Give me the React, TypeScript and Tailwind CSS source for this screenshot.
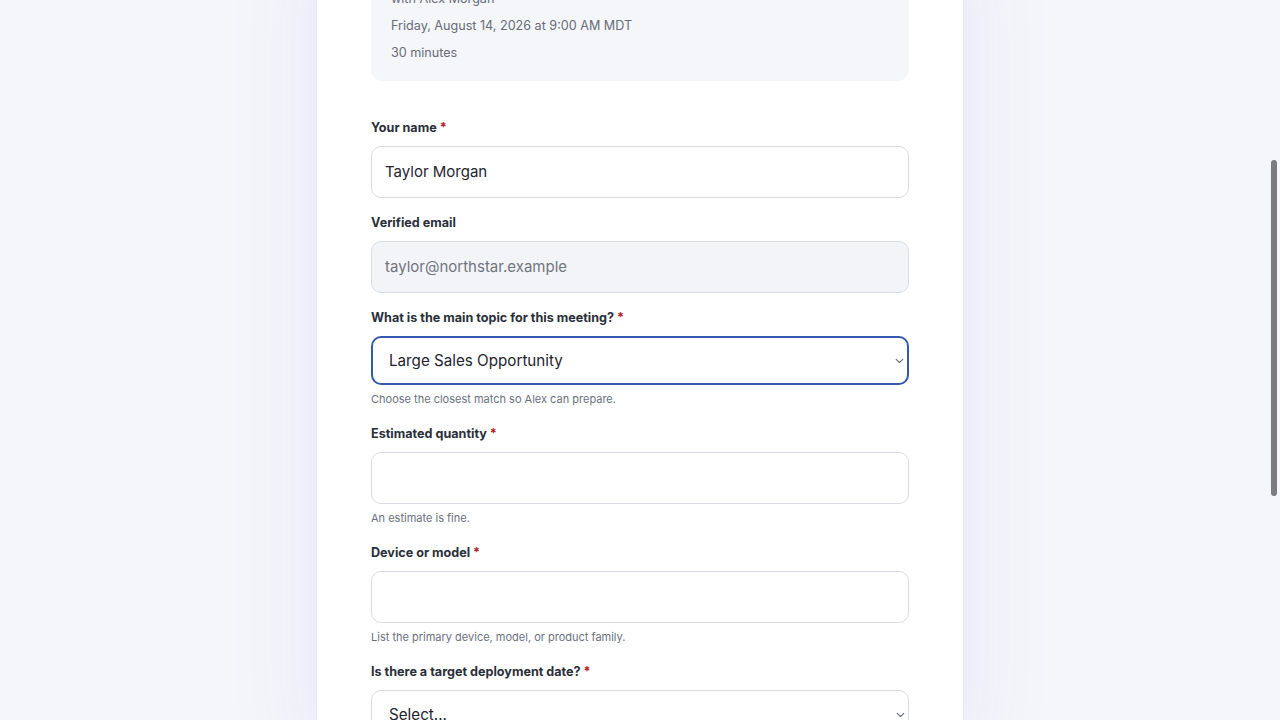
import type { ReactNode } from 'react'

function Label({ children, required }: { children: ReactNode; required?: boolean }) {
  return (
    <label className="mb-[10px] block text-[12.6px] font-bold leading-[16px] text-[#2a2f3a]">
      {children}
      {required && <span className="text-[#b4232c]"> *</span>}
    </label>
  )
}

function Hint({ children }: { children: ReactNode }) {
  return <p className="mb-[2px] mt-[6px] text-[11px] leading-[16px] text-[#6b7080]">{children}</p>
}

function TextField({ value, disabled }: { value?: string; disabled?: boolean }) {
  return (
    <div
      className={
        disabled
          ? 'flex h-[52px] items-center rounded-[10px] border border-[#d9dce3] bg-[#f3f4f7] px-[13px] text-[15px] text-[#70757f]'
          : 'flex h-[52px] items-center rounded-[10px] border border-[#d9dce3] bg-white px-[13px] text-[15px] text-[#1f2430]'
      }
    >
      {value}
    </div>
  )
}

function SelectField({ value, focused }: { value: string; focused?: boolean }) {
  return (
    <div
      className={
        focused
          ? 'relative flex h-[49px] items-center rounded-[10px] border-2 border-[#3459ad] bg-white px-[16px] pt-[2px] text-[15.2px] text-[#1f2430]'
          : 'relative flex h-[49px] items-center rounded-[10px] border border-[#d9dce3] bg-white px-[17px] pt-[2px] text-[15.2px] text-[#1f2430]'
      }
    >
      {value}
      <svg className="absolute right-[3px] top-1/2 -translate-y-1/2" width="9" height="6" viewBox="0 0 9 6" fill="none">
        <path d="M1.2 1.3L4.5 4.5l3.3-3.2" stroke="#6b7280" strokeWidth="1.1" strokeLinecap="round" strokeLinejoin="round" />
      </svg>
    </div>
  )
}

export default function App() {
  return (
    <div
      className="relative h-screen overflow-hidden bg-[#f5f6fa]"
      style={{ fontFamily: 'Inter, "Noto Sans", "Liberation Sans", sans-serif' }}
    >
      <div className="mx-auto -mt-[60px] min-h-[820px] w-[648px] border-x border-[#e6e8f2] bg-white px-[54px] shadow-[0_0_90px_rgba(79,70,229,0.09)]">
        <div className="rounded-xl bg-[#f5f6fa] px-5 pb-[18px] pt-5">
          <p className="text-[15px] font-semibold leading-[22px] text-[#1f2430]">Sales consultation</p>
          <div className="mt-[7px] flex flex-col gap-[7px] text-[12.6px] leading-[20px] text-[#676c78]">
            <p>with Alex Morgan</p>
            <p>Friday, August 14, 2026 at 9:00 AM MDT</p>
            <p>30 minutes</p>
          </div>
        </div>

        <form className="mt-[39px] flex flex-col gap-[17px]">
          <div>
            <Label required>Your name</Label>
            <TextField value="Taylor Morgan" />
          </div>
          <div>
            <Label>Verified email</Label>
            <TextField value="taylor@northstar.example" disabled />
          </div>
          <div>
            <Label required>What is the main topic for this meeting?</Label>
            <SelectField value="Large Sales Opportunity" focused />
            <Hint>Choose the closest match so Alex can prepare.</Hint>
          </div>
          <div>
            <Label required>Estimated quantity</Label>
            <TextField />
            <Hint>An estimate is fine.</Hint>
          </div>
          <div>
            <Label required>Device or model</Label>
            <TextField />
            <Hint>List the primary device, model, or product family.</Hint>
          </div>
          <div>
            <Label required>Is there a target deployment date?</Label>
            <SelectField value="Select..." />
          </div>
        </form>
      </div>

      {/* overlay scrollbar thumb */}
      <div className="fixed right-[3px] top-[160px] h-[336px] w-[6px] rounded-full bg-[#7b7b7b]" />
    </div>
  )
}
